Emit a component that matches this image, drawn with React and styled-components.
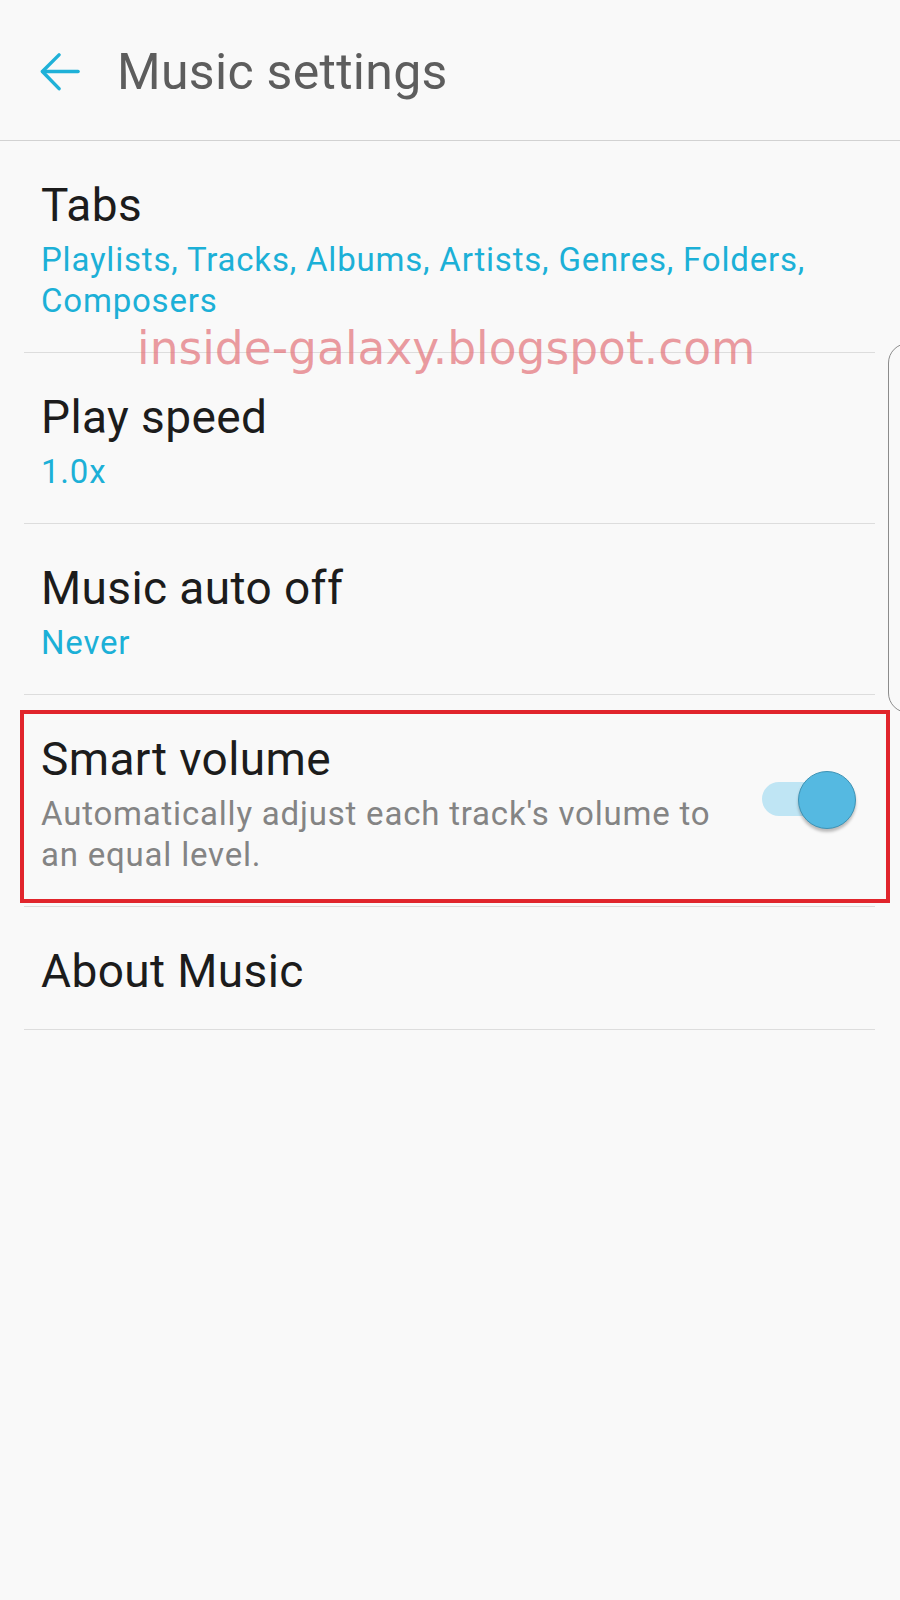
import React from 'react';
import styled, { createGlobalStyle } from 'styled-components';

const GlobalStyle = createGlobalStyle`
  html, body {
    margin: 0;
    padding: 0;
    background: #f9f9f9;
  }
  body {
    font-family: Roboto, "Liberation Sans", sans-serif;
  }
`;

const Screen = styled.div`
  position: relative;
  width: 900px;
  min-height: 1600px;
  background: #f9f9f9;
  overflow: hidden;
`;

const Header = styled.header`
  height: 141px;
  display: flex;
  align-items: center;
  gap: 37px;
  padding: 4px 0 0 40px;
  box-sizing: border-box;
  border-bottom: 1px solid #d2d2d2;
`;

const BackButton = styled.button`
  width: 40px;
  height: 40px;
  padding: 0;
  border: none;
  background: none;
  display: flex;
  align-items: center;
  justify-content: center;
`;

const Title = styled.h1`
  margin: 0;
  font-size: 50px;
  font-weight: 400;
  color: #5d5d5d;
  letter-spacing: 0.3px;
`;

const List = styled.div`
  display: flex;
  flex-direction: column;
  padding: 0 25px 0 24px;
`;

const Row = styled.div`
  position: relative;
  display: flex;
  align-items: center;
  padding: 38px 0 ${p => (p.$single ? 32 : 31)}px 17px;
  border-bottom: 1px solid #dddddd;
`;

const Texts = styled.div`
  flex: 1;
  display: flex;
  flex-direction: column;
  max-width: ${p => (p.$narrow ? '690px' : 'none')};
`;

const ItemTitle = styled.div`
  font-size: 46px;
  line-height: 52px;
  letter-spacing: 0.4px;
  color: #1c1c1c;
`;

const ItemValue = styled.div`
  margin-top: 8px;
  font-size: 33px;
  line-height: 41px;
  letter-spacing: 0.8px;
  color: ${p => (p.$muted ? '#848484' : '#1cb0d7')};
`;

const Switch = styled.div`
  position: relative;
  width: 97px;
  height: 58px;
  margin: -8px 18px 0 auto;
  flex-shrink: 0;
`;

const Track = styled.div`
  position: absolute;
  left: 2px;
  top: 11px;
  width: 66px;
  height: 34px;
  border-radius: 17px;
  background: #bfe5f4;
`;

const Thumb = styled.div`
  position: absolute;
  left: 38px;
  top: 0;
  width: 56px;
  height: 56px;
  border-radius: 50%;
  background: #55b9e1;
  border: 1px solid #3e93b5;
  box-shadow: 0 3px 3px rgba(0, 0, 0, 0.25);
`;

const Highlight = styled.div`
  position: absolute;
  left: -4px;
  top: 15px;
  width: 870px;
  height: 193px;
  border: 4px solid #e1252c;
  box-sizing: border-box;
  pointer-events: none;
`;

const Watermark = styled.div`
  position: absolute;
  left: 137px;
  top: 322px;
  font-family: "DejaVu Sans", Verdana, sans-serif;
  font-size: 45.5px;
  color: rgba(228, 118, 124, 0.72);
  white-space: nowrap;
  pointer-events: none;
`;

const EdgeHandle = styled.div`
  position: absolute;
  left: 888px;
  top: 343px;
  width: 40px;
  height: 370px;
  border: 1.5px solid #8c8c8c;
  border-radius: 22px;
  box-sizing: border-box;
`;

const BackArrow = () => (
  <svg width="42" height="40" viewBox="0 0 42 40" fill="none" stroke="#1fb1d8" strokeWidth="3.6" strokeLinecap="round" strokeLinejoin="round">
    <path d="M40 19.5H3" />
    <path d="M20 2L2.5 19.5L20 37.5" />
  </svg>
);

const settings = [
  { title: 'Tabs', value: 'Playlists, Tracks, Albums, Artists, Genres, Folders, Composers' },
  { title: 'Play speed', value: '1.0x' },
  { title: 'Music auto off', value: 'Never' },
];

export default function App() {
  return (
    <Screen>
      <GlobalStyle />
      <Header>
        <BackButton aria-label="Back">
          <BackArrow />
        </BackButton>
        <Title>Music settings</Title>
      </Header>

      <List>
        {settings.map(s => (
          <Row key={s.title}>
            <Texts>
              <ItemTitle>{s.title}</ItemTitle>
              <ItemValue>{s.value}</ItemValue>
            </Texts>
          </Row>
        ))}

        <Row>
          <Texts $narrow>
            <ItemTitle>Smart volume</ItemTitle>
            <ItemValue $muted>Automatically adjust each track's volume to an equal level.</ItemValue>
          </Texts>
          <Switch>
            <Track />
            <Thumb />
          </Switch>
          <Highlight />
        </Row>

        <Row $single>
          <Texts>
            <ItemTitle>About Music</ItemTitle>
          </Texts>
        </Row>
      </List>

      <Watermark>inside-galaxy.blogspot.com</Watermark>
      <EdgeHandle />
    </Screen>
  );
}
